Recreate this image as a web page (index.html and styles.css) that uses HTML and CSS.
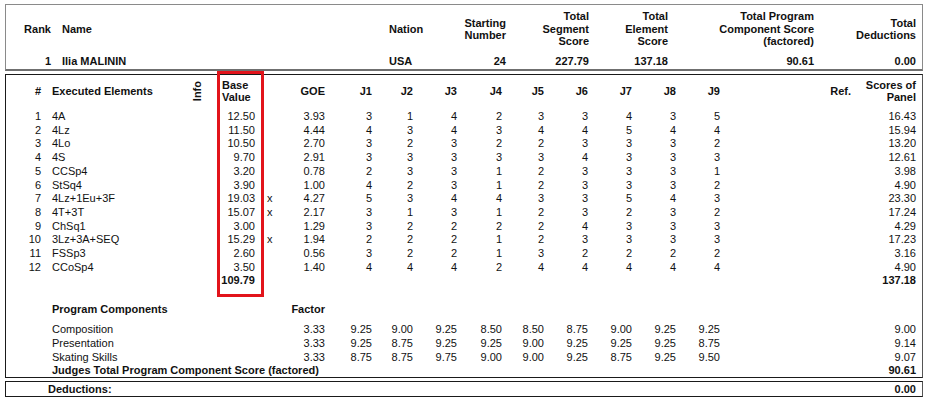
FILE: index.html
```html
<!DOCTYPE html>
<html lang="en">
<head>
<meta charset="utf-8">
<title>Judges Details per Skater</title>
<link rel="stylesheet" href="styles.css">
</head>
<body>
<div class="page">
  <div class="summary">
    <div class="srow shead">
      <div class="r">Rank</div>
      <div class="sname">Name</div>
      <div>Nation</div>
      <div class="r">Starting<br>Number</div>
      <div class="r">Total<br>Segment<br>Score</div>
      <div class="r">Total<br>Element<br>Score</div>
      <div class="r">Total Program<br>Component Score<br>(factored)</div>
      <div class="r">Total<br>Deductions</div>
    </div>
    <div class="srow sdata">
      <div class="r">1</div>
      <div class="sname">Ilia MALININ</div>
      <div>USA</div>
      <div class="r">24</div>
      <div class="r">227.79</div>
      <div class="r">137.18</div>
      <div class="r">90.61</div>
      <div class="r">0.00</div>
    </div>
  </div>

  <div class="details">
    <div class="erow ehead">
      <div class="n">#</div>
      <div class="el">Executed Elements</div>
      <div class="info"><span>Info</span></div>
      <div class="basehead">Base<br>Value</div>
      <div></div>
      <div class="goe">GOE</div>
      <div class="j">J1</div><div class="j">J2</div><div class="j">J3</div><div class="j">J4</div><div class="j">J5</div><div class="j">J6</div><div class="j">J7</div><div class="j">J8</div><div class="j">J9</div>
      <div class="j">Ref.</div>
      <div class="j">Scores of<br>Panel</div>
    </div>

    <div class="erow"><div class="n">1</div><div class="el">4A</div><div></div><div class="base">12.50</div><div class="x"></div><div class="goe">3.93</div><div class="j">3</div><div class="j">1</div><div class="j">4</div><div class="j">2</div><div class="j">3</div><div class="j">3</div><div class="j">4</div><div class="j">3</div><div class="j">5</div><div></div><div class="j">16.43</div></div>
    <div class="erow"><div class="n">2</div><div class="el">4Lz</div><div></div><div class="base">11.50</div><div class="x"></div><div class="goe">4.44</div><div class="j">4</div><div class="j">3</div><div class="j">4</div><div class="j">3</div><div class="j">4</div><div class="j">4</div><div class="j">5</div><div class="j">4</div><div class="j">4</div><div></div><div class="j">15.94</div></div>
    <div class="erow"><div class="n">3</div><div class="el">4Lo</div><div></div><div class="base">10.50</div><div class="x"></div><div class="goe">2.70</div><div class="j">3</div><div class="j">2</div><div class="j">3</div><div class="j">2</div><div class="j">2</div><div class="j">3</div><div class="j">3</div><div class="j">3</div><div class="j">2</div><div></div><div class="j">13.20</div></div>
    <div class="erow"><div class="n">4</div><div class="el">4S</div><div></div><div class="base">9.70</div><div class="x"></div><div class="goe">2.91</div><div class="j">3</div><div class="j">3</div><div class="j">3</div><div class="j">3</div><div class="j">3</div><div class="j">4</div><div class="j">3</div><div class="j">3</div><div class="j">3</div><div></div><div class="j">12.61</div></div>
    <div class="erow"><div class="n">5</div><div class="el">CCSp4</div><div></div><div class="base">3.20</div><div class="x"></div><div class="goe">0.78</div><div class="j">2</div><div class="j">3</div><div class="j">3</div><div class="j">1</div><div class="j">2</div><div class="j">3</div><div class="j">3</div><div class="j">3</div><div class="j">1</div><div></div><div class="j">3.98</div></div>
    <div class="erow"><div class="n">6</div><div class="el">StSq4</div><div></div><div class="base">3.90</div><div class="x"></div><div class="goe">1.00</div><div class="j">4</div><div class="j">2</div><div class="j">3</div><div class="j">1</div><div class="j">2</div><div class="j">3</div><div class="j">3</div><div class="j">3</div><div class="j">2</div><div></div><div class="j">4.90</div></div>
    <div class="erow"><div class="n">7</div><div class="el">4Lz+1Eu+3F</div><div></div><div class="base">19.03</div><div class="x">x</div><div class="goe">4.27</div><div class="j">5</div><div class="j">3</div><div class="j">4</div><div class="j">4</div><div class="j">3</div><div class="j">3</div><div class="j">5</div><div class="j">4</div><div class="j">3</div><div></div><div class="j">23.30</div></div>
    <div class="erow"><div class="n">8</div><div class="el">4T+3T</div><div></div><div class="base">15.07</div><div class="x">x</div><div class="goe">2.17</div><div class="j">3</div><div class="j">1</div><div class="j">3</div><div class="j">1</div><div class="j">2</div><div class="j">3</div><div class="j">2</div><div class="j">3</div><div class="j">2</div><div></div><div class="j">17.24</div></div>
    <div class="erow"><div class="n">9</div><div class="el">ChSq1</div><div></div><div class="base">3.00</div><div class="x"></div><div class="goe">1.29</div><div class="j">3</div><div class="j">2</div><div class="j">2</div><div class="j">2</div><div class="j">2</div><div class="j">4</div><div class="j">3</div><div class="j">3</div><div class="j">3</div><div></div><div class="j">4.29</div></div>
    <div class="erow"><div class="n">10</div><div class="el">3Lz+3A+SEQ</div><div></div><div class="base">15.29</div><div class="x">x</div><div class="goe">1.94</div><div class="j">2</div><div class="j">2</div><div class="j">2</div><div class="j">1</div><div class="j">2</div><div class="j">3</div><div class="j">3</div><div class="j">3</div><div class="j">3</div><div></div><div class="j">17.23</div></div>
    <div class="erow"><div class="n">11</div><div class="el">FSSp3</div><div></div><div class="base">2.60</div><div class="x"></div><div class="goe">0.56</div><div class="j">3</div><div class="j">2</div><div class="j">2</div><div class="j">1</div><div class="j">3</div><div class="j">2</div><div class="j">2</div><div class="j">2</div><div class="j">2</div><div></div><div class="j">3.16</div></div>
    <div class="erow"><div class="n">12</div><div class="el">CCoSp4</div><div></div><div class="base">3.50</div><div class="x"></div><div class="goe">1.40</div><div class="j">4</div><div class="j">4</div><div class="j">4</div><div class="j">2</div><div class="j">4</div><div class="j">4</div><div class="j">4</div><div class="j">4</div><div class="j">4</div><div></div><div class="j">4.90</div></div>
    <div class="erow total"><div class="n"></div><div class="el"></div><div></div><div class="base">109.79</div><div class="x"></div><div class="goe"></div><div class="j"></div><div class="j"></div><div class="j"></div><div class="j"></div><div class="j"></div><div class="j"></div><div class="j"></div><div class="j"></div><div class="j"></div><div></div><div class="j">137.18</div></div>

    <div class="erow pchead"><div class="n"></div><div class="el span4">Program Components</div><div class="goe">Factor</div></div>
    <div class="erow pcrow"><div class="n"></div><div class="el span4">Composition</div><div class="goe">3.33</div><div class="j">9.25</div><div class="j">9.00</div><div class="j">9.25</div><div class="j">8.50</div><div class="j">8.50</div><div class="j">8.75</div><div class="j">9.00</div><div class="j">9.25</div><div class="j">9.25</div><div></div><div class="j">9.00</div></div>
    <div class="erow pcrow"><div class="n"></div><div class="el span4">Presentation</div><div class="goe">3.33</div><div class="j">9.25</div><div class="j">8.75</div><div class="j">9.25</div><div class="j">9.25</div><div class="j">9.00</div><div class="j">9.25</div><div class="j">9.25</div><div class="j">9.25</div><div class="j">8.75</div><div></div><div class="j">9.14</div></div>
    <div class="erow pcrow"><div class="n"></div><div class="el span4">Skating Skills</div><div class="goe">3.33</div><div class="j">8.75</div><div class="j">8.75</div><div class="j">9.75</div><div class="j">9.00</div><div class="j">9.00</div><div class="j">9.25</div><div class="j">8.75</div><div class="j">9.25</div><div class="j">9.50</div><div></div><div class="j">9.07</div></div>
    <div class="erow total last"><div class="n"></div><div class="el span5">Judges Total Program Component Score (factored)</div><div class="scorecol j">90.61</div></div>
  </div>

  <div class="deductions">
    <div class="dlabel">Deductions:</div>
    <div class="dval">0.00</div>
  </div>

  <div class="highlight"></div>
</div>
</body>
</html>
```

FILE: styles.css
```css
html, body {
  margin: 0;
  padding: 0;
  background: #ffffff;
}

body {
  font-family: "Liberation Sans", Arial, sans-serif;
  font-size: 11px;
  color: #111111;
}

.page {
  position: relative;
  width: 918px;
  padding: 4px 0 0 5px;
}

/* ---------- summary box ---------- */
.summary {
  box-sizing: border-box;
  width: 918px;
  border: 1px solid #8a8a8a;
  border-bottom: 2px solid #6f6f6f;
  padding: 5px 6px 1px 0;
}

.srow {
  display: grid;
  grid-template-columns: 45px 338px 41px 76px 83px 79px 146px 102px;
  font-weight: bold;
  align-items: center;
}

.shead {
  line-height: 12.5px;
  height: 38px;
}

.sdata {
  margin-top: 7px;
  line-height: 13px;
}

.srow .r {
  text-align: right;
}

.srow .sname {
  padding-left: 11px;
}

/* ---------- details box ---------- */
.details {
  box-sizing: border-box;
  width: 918px;
  margin-top: 3px;
  border: 1px solid #1a1a1a;
  border-right-color: #555555;
  padding: 4px 6px 0 0;
}

.erow {
  display: grid;
  grid-template-columns: 37px 147px 20px 48px 22px 47px 45px 41px 44px 45px 42px 44px 44px 44px 44px 131px 65px;
  line-height: 13.7px;
  align-items: center;
}

.ehead {
  font-weight: bold;
  line-height: 12px;
  height: 24px;
  margin-bottom: 7px;
}

.n {
  text-align: right;
  padding-right: 2px;
}

.el {
  padding-left: 9px;
}

.info {
  display: flex;
  justify-content: center;
  align-items: center;
}

.info span {
  writing-mode: vertical-rl;
  transform: rotate(180deg);
  line-height: 11px;
  padding-left: 5px;
}

.basehead {
  padding-left: 12px;
}

.base {
  text-align: right;
  padding-right: 3px;
}

.x {
  padding-left: 9px;
}

.goe {
  text-align: right;
  padding-right: 2px;
}

.j {
  text-align: right;
}

.total {
  font-weight: bold;
}

.pchead {
  font-weight: bold;
  margin-top: 15px;
  margin-bottom: 5px;
}

.pcrow {
  line-height: 14px;
}

.span4 {
  grid-column: 2 / span 4;
}

.span5 {
  grid-column: 2 / span 5;
}

.scorecol {
  grid-column: 17;
}

.last {
  line-height: 13px;
}

/* ---------- deductions box ---------- */
.deductions {
  box-sizing: border-box;
  width: 918px;
  margin-top: 3px;
  border: 1px solid #1a1a1a;
  border-right-color: #555555;
  display: flex;
  justify-content: space-between;
  font-weight: bold;
  line-height: 14px;
  padding: 0 6px 0 42px;
}

/* ---------- annotation overlay ---------- */
.highlight {
  position: absolute;
  left: 217px;
  top: 71px;
  width: 47px;
  height: 226px;
  box-sizing: border-box;
  border: 3px solid #e2141b;
}
```
